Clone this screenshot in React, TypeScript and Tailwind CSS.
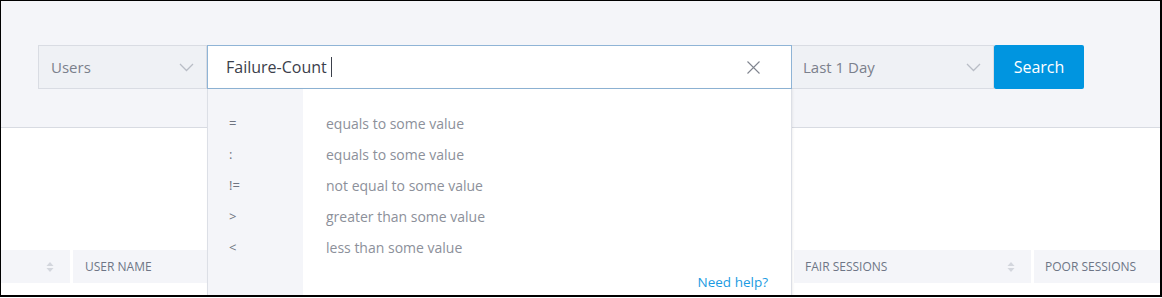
type Op = {sym: string; text: string};

const OPS: Op[] = [
  {sym: '=', text: 'equals to some value'},
  {sym: ':', text: 'equals to some value'},
  {sym: '!=', text: 'not equal to some value'},
  {sym: '>', text: 'greater than some value'},
  {sym: '<', text: 'less than some value'}
];

const font = "font-['Open_Sans','Noto_Sans',sans-serif]";

function SortIcon() {
  return (
    <svg width="8" height="12" viewBox="0 0 8 12" className="shrink-0">
      <path d="M4 1 L7.5 5 H0.5 Z" fill="#d3d6dd" />
      <path d="M4 11 L7.5 7 H0.5 Z" fill="#d3d6dd" />
    </svg>
  );
}

function Chevron() {
  return (
    <svg width="15" height="9" viewBox="0 0 15 9" className="shrink-0">
      <polyline points="1,1 7.5,7.5 14,1" fill="none" stroke="#b9bdc6" strokeWidth="1.3" />
    </svg>
  );
}

function ClearIcon() {
  return (
    <svg width="13" height="13" viewBox="0 0 13 13" className="shrink-0 ml-auto">
      <path d="M0.5 0.5 L12.5 12.5 M12.5 0.5 L0.5 12.5" stroke="#80858f" strokeWidth="1.1" fill="none" />
    </svg>
  );
}

function Select({label, className}: {label: string; className: string}) {
  return (
    <div className={`${className} h-full flex items-center justify-between bg-[#eff1f5] border border-[#d9dce3] text-[15px] text-[#7b808c]`}>
      <span>{label}</span>
      <Chevron />
    </div>
  );
}

export default function App() {
  return (
    <div className={`${font} w-[1162px] h-[297px] bg-white border-t border-l border-r-2 border-b-2 border-black overflow-hidden flex flex-col`}>
      <section className="h-[127px] shrink-0 bg-[#f4f5f9] border-b border-[#d8dbe2] pt-[44px] pl-[37px]">
        <div className="flex h-[44px]">
          <Select label="Users" className="w-[169px] pl-3 pr-[12px]" />
          <div className="relative w-[585px] h-full">
            <div className="h-full flex items-center bg-white border border-[#8fb4d6] pl-[18px] pr-[31px]">
              <span className="text-[16px] text-[#3b404b]">Failure-Count</span>
              <span className="ml-[4px] w-px h-[20px] bg-[#3b404b]" />
              <ClearIcon />
            </div>
            <div className="absolute left-0 top-full w-full h-[220px] z-10 bg-white border-x border-[#dcdfe6] shadow-[1px_0_2px_rgba(0,0,0,0.06)] flex">
              <div className="w-[95px] bg-[#f4f5f9] pt-[19px] pl-[21px]">
                {OPS.map(o => (
                  <div key={o.sym + o.text} className="h-[31px] flex items-center text-[13px] text-[#6f7480]">
                    {o.sym}
                  </div>
                ))}
              </div>
              <div className="flex-1 pt-[19px] pl-[23px] pr-[23px] flex flex-col">
                {OPS.map(o => (
                  <div key={o.sym + o.text} className="h-[31px] flex items-center text-[14px] text-[#8c909a]">
                    {o.text}
                  </div>
                ))}
                <div className="mt-[9px] h-[20px] flex items-center justify-end text-[13.5px] text-[#1a9be2]">
                  Need help?
                </div>
              </div>
            </div>
          </div>
          <Select label="Last 1 Day" className="w-[202px] border-l-0 pl-[11px] pr-[12px]" />
          <button className="w-[90px] h-full bg-[#0095e0] text-white text-[16px] rounded-[2px]">Search</button>
        </div>
      </section>

      <div className="h-[122px] shrink-0" />

      <div className="flex gap-[3px] h-[33px] text-[12px] text-[#6e7586] uppercase">
        <div className="w-[69px] bg-[#f4f5f9] flex items-center justify-end pr-[16px]">
          <SortIcon />
        </div>
        <div className="w-[327px] bg-[#f4f5f9] flex items-center pl-[12px]">User Name</div>
        <div className="w-[388px] bg-[#f4f5f9]" />
        <div className="w-[237px] bg-[#f4f5f9] flex items-center justify-between pl-[11px] pr-[16px]">
          <span>Fair Sessions</span>
          <SortIcon />
        </div>
        <div className="flex-1 bg-[#f4f5f9] flex items-center pl-[11px]">Poor Sessions</div>
      </div>
    </div>
  );
}
